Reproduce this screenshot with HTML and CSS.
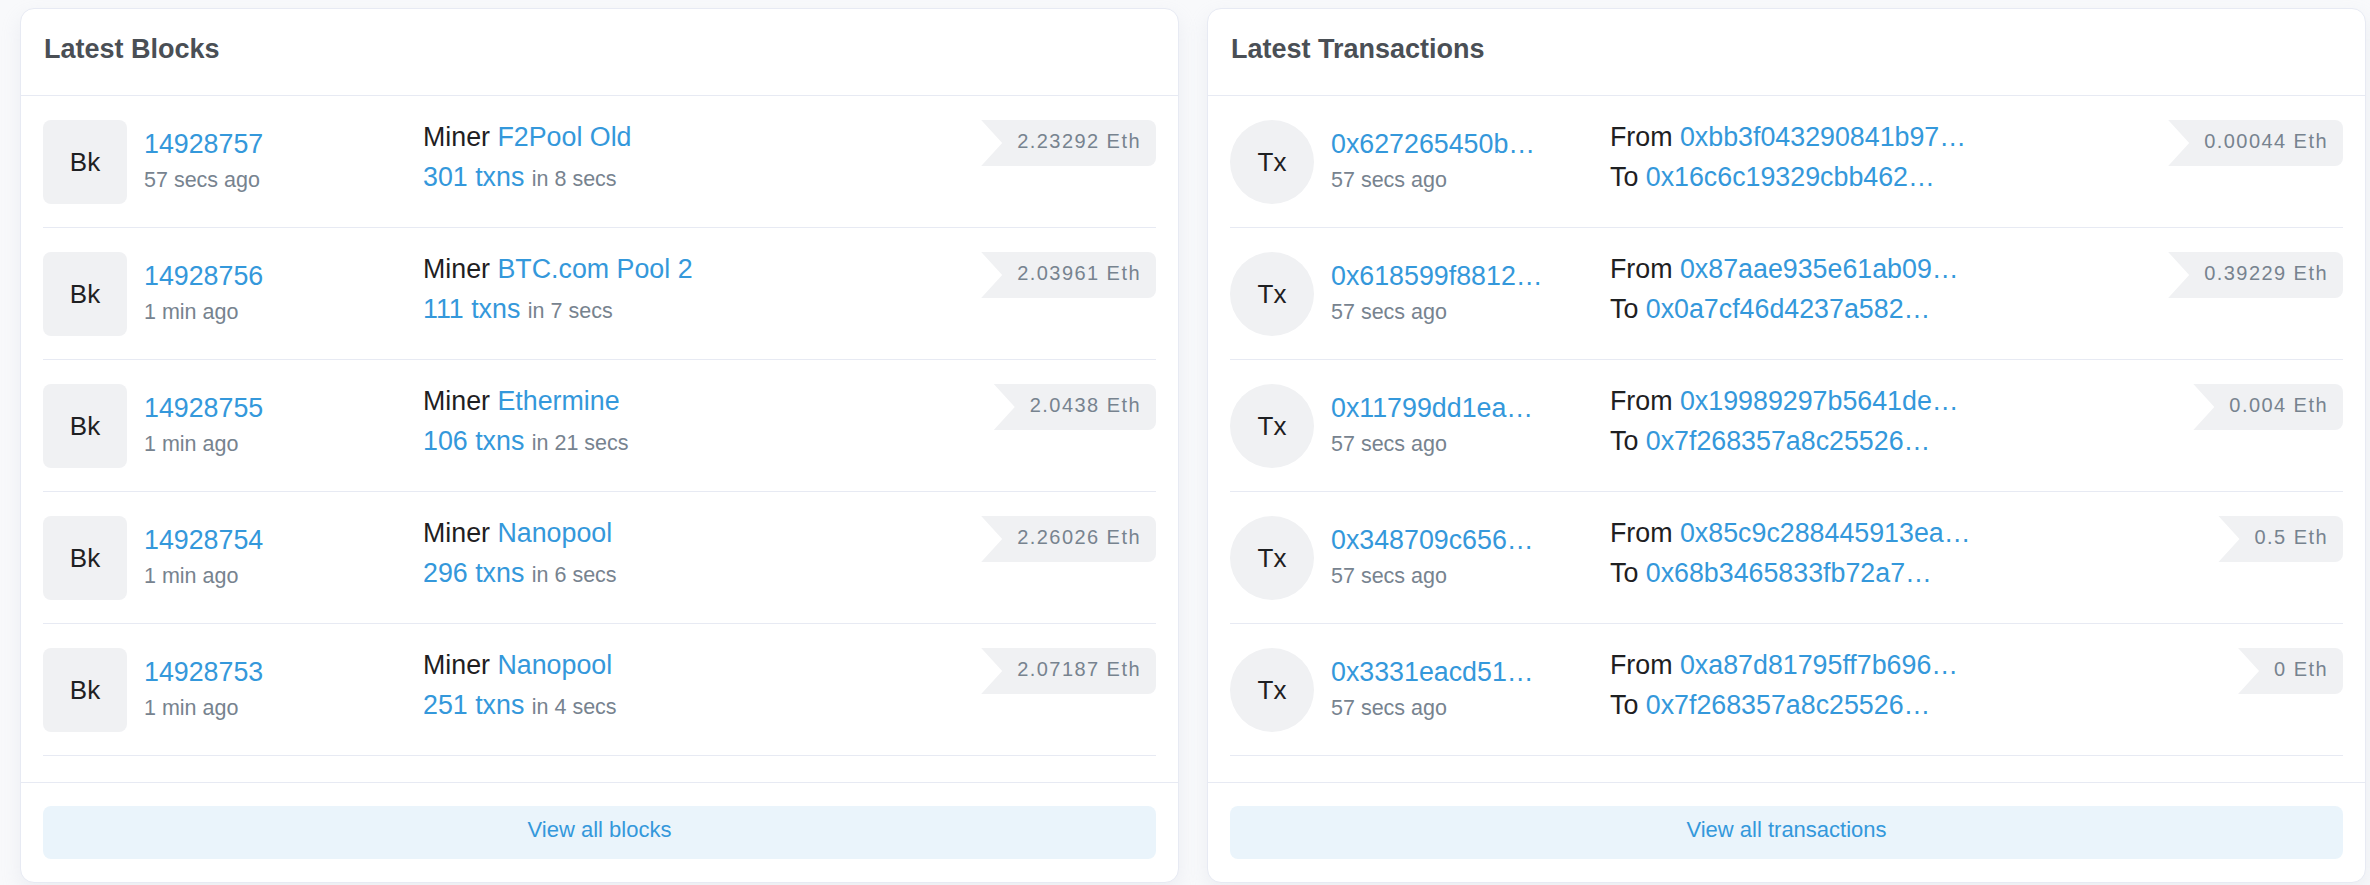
FILE: index.html
```html
<!DOCTYPE html>
<html lang="en">
<head>
<meta charset="utf-8">
<title>Latest Blocks and Transactions</title>
<link rel="stylesheet" href="styles.css">
</head>
<body>
<div class="panels">
  <section class="card">
    <div class="card-header"><h2 class="card-title">Latest Blocks</h2></div>
    <div class="card-body">
      <div class="item">
        <div class="item-main">
          <div class="avatar">Bk</div>
          <div class="item-id"><a class="link" href="#">14928757</a><span class="muted">57 secs ago</span></div>
        </div>
        <div class="item-detail">
          <div>Miner <a class="link" href="#">F2Pool Old</a></div>
          <div><a class="link" href="#">301 txns</a> <span class="muted">in 8 secs</span></div>
        </div>
        <div class="item-value"><span class="badge">2.23292 Eth</span></div>
      </div>
      <div class="item">
        <div class="item-main">
          <div class="avatar">Bk</div>
          <div class="item-id"><a class="link" href="#">14928756</a><span class="muted">1 min ago</span></div>
        </div>
        <div class="item-detail">
          <div>Miner <a class="link" href="#">BTC.com Pool 2</a></div>
          <div><a class="link" href="#">111 txns</a> <span class="muted">in 7 secs</span></div>
        </div>
        <div class="item-value"><span class="badge">2.03961 Eth</span></div>
      </div>
      <div class="item">
        <div class="item-main">
          <div class="avatar">Bk</div>
          <div class="item-id"><a class="link" href="#">14928755</a><span class="muted">1 min ago</span></div>
        </div>
        <div class="item-detail">
          <div>Miner <a class="link" href="#">Ethermine</a></div>
          <div><a class="link" href="#">106 txns</a> <span class="muted">in 21 secs</span></div>
        </div>
        <div class="item-value"><span class="badge">2.0438 Eth</span></div>
      </div>
      <div class="item">
        <div class="item-main">
          <div class="avatar">Bk</div>
          <div class="item-id"><a class="link" href="#">14928754</a><span class="muted">1 min ago</span></div>
        </div>
        <div class="item-detail">
          <div>Miner <a class="link" href="#">Nanopool</a></div>
          <div><a class="link" href="#">296 txns</a> <span class="muted">in 6 secs</span></div>
        </div>
        <div class="item-value"><span class="badge">2.26026 Eth</span></div>
      </div>
      <div class="item">
        <div class="item-main">
          <div class="avatar">Bk</div>
          <div class="item-id"><a class="link" href="#">14928753</a><span class="muted">1 min ago</span></div>
        </div>
        <div class="item-detail">
          <div>Miner <a class="link" href="#">Nanopool</a></div>
          <div><a class="link" href="#">251 txns</a> <span class="muted">in 4 secs</span></div>
        </div>
        <div class="item-value"><span class="badge">2.07187 Eth</span></div>
      </div>
    </div>
    <div class="card-footer"><a class="btn-view" href="#">View all blocks</a></div>
  </section>

  <section class="card">
    <div class="card-header"><h2 class="card-title">Latest Transactions</h2></div>
    <div class="card-body">
      <div class="item">
        <div class="item-main">
          <div class="avatar avatar-round">Tx</div>
          <div class="item-id"><a class="link" href="#">0x627265450b…</a><span class="muted">57 secs ago</span></div>
        </div>
        <div class="item-detail">
          <div>From <a class="link" href="#">0xbb3f043290841b97…</a></div>
          <div>To <a class="link" href="#">0x16c6c19329cbb462…</a></div>
        </div>
        <div class="item-value"><span class="badge">0.00044 Eth</span></div>
      </div>
      <div class="item">
        <div class="item-main">
          <div class="avatar avatar-round">Tx</div>
          <div class="item-id"><a class="link" href="#">0x618599f8812…</a><span class="muted">57 secs ago</span></div>
        </div>
        <div class="item-detail">
          <div>From <a class="link" href="#">0x87aae935e61ab09…</a></div>
          <div>To <a class="link" href="#">0x0a7cf46d4237a582…</a></div>
        </div>
        <div class="item-value"><span class="badge">0.39229 Eth</span></div>
      </div>
      <div class="item">
        <div class="item-main">
          <div class="avatar avatar-round">Tx</div>
          <div class="item-id"><a class="link" href="#">0x11799dd1ea…</a><span class="muted">57 secs ago</span></div>
        </div>
        <div class="item-detail">
          <div>From <a class="link" href="#">0x19989297b5641de…</a></div>
          <div>To <a class="link" href="#">0x7f268357a8c25526…</a></div>
        </div>
        <div class="item-value"><span class="badge">0.004 Eth</span></div>
      </div>
      <div class="item">
        <div class="item-main">
          <div class="avatar avatar-round">Tx</div>
          <div class="item-id"><a class="link" href="#">0x348709c656…</a><span class="muted">57 secs ago</span></div>
        </div>
        <div class="item-detail">
          <div>From <a class="link" href="#">0x85c9c288445913ea…</a></div>
          <div>To <a class="link" href="#">0x68b3465833fb72a7…</a></div>
        </div>
        <div class="item-value"><span class="badge">0.5 Eth</span></div>
      </div>
      <div class="item">
        <div class="item-main">
          <div class="avatar avatar-round">Tx</div>
          <div class="item-id"><a class="link" href="#">0x3331eacd51…</a><span class="muted">57 secs ago</span></div>
        </div>
        <div class="item-detail">
          <div>From <a class="link" href="#">0xa87d81795ff7b696…</a></div>
          <div>To <a class="link" href="#">0x7f268357a8c25526…</a></div>
        </div>
        <div class="item-value"><span class="badge">0 Eth</span></div>
      </div>
    </div>
    <div class="card-footer"><a class="btn-view" href="#">View all transactions</a></div>
  </section>
</div>
</body>
</html>
```

FILE: styles.css
```css
* { box-sizing: border-box; }

html, body {
  margin: 0;
  height: 100%;
}

body {
  padding: 8px 4px 0 20px;
  background: #f8f9fb;
  font-family: "Liberation Sans", Arial, Helvetica, sans-serif;
  font-size: 26.8px;
  line-height: 1.5;
  color: #1e2022;
}

.panels {
  display: grid;
  grid-template-columns: 1fr 1fr;
  gap: 28px;
}

.card {
  background: #fff;
  border: 1px solid #e7eaf3;
  border-radius: 14px;
  box-shadow: 0 8px 19px rgba(189, 197, 209, 0.2);
  display: flex;
  flex-direction: column;
}

.card-header {
  padding: 20px 22px 26px 23px;
  border-bottom: 1px solid #e7eaf3;
}

.card-title {
  margin: 0;
  font-size: 27px;
  line-height: 40px;
  font-weight: 700;
  color: #4a4f55;
}

.card-body {
  padding: 0 22px 26px;
}

.item {
  display: grid;
  grid-template-columns: 380px 1fr auto;
  align-items: start;
  padding: 24px 0 23px;
  border-bottom: 1px solid #e7eaf3;
}

.item-main {
  display: flex;
  align-items: center;
  gap: 17px;
}

.avatar {
  flex: none;
  width: 84px;
  height: 84px;
  border-radius: 8px;
  background: #f0f1f3;
  display: flex;
  align-items: center;
  justify-content: center;
  color: #1e2022;
  font-size: 26px;
}

.avatar-round {
  border-radius: 50%;
}

.item-id {
  display: flex;
  flex-direction: column;
  padding-bottom: 4px;
  width: 214px;
  white-space: nowrap;
  overflow: hidden;
}

.link {
  color: #3498db;
  text-decoration: none;
}

.muted {
  color: #77838f;
  font-size: 21.5px;
}

.item-detail {
  margin-top: -3px;
  white-space: nowrap;
}

.item-value {
  display: flex;
  justify-content: flex-end;
}

.badge {
  display: inline-block;
  background: #f0f1f3;
  color: #77838f;
  font-size: 20px;
  letter-spacing: 1.45px;
  line-height: 28px;
  padding: 7px 15px 11px 36px;
  border-radius: 0 8px 8px 0;
  clip-path: polygon(0 0, 100% 0, 100% 100%, 0 100%, 21px 50%);
  white-space: nowrap;
}

.card-footer {
  border-top: 1px solid #e7eaf3;
  padding: 23px 22px 23px;
}

.btn-view {
  display: block;
  height: 53px;
  padding: 10px 0 16px;
  line-height: 27px;
  text-align: center;
  font-size: 22px;
  color: #3498db;
  background: rgba(52, 152, 219, 0.1);
  border-radius: 8px;
  text-decoration: none;
}
```
